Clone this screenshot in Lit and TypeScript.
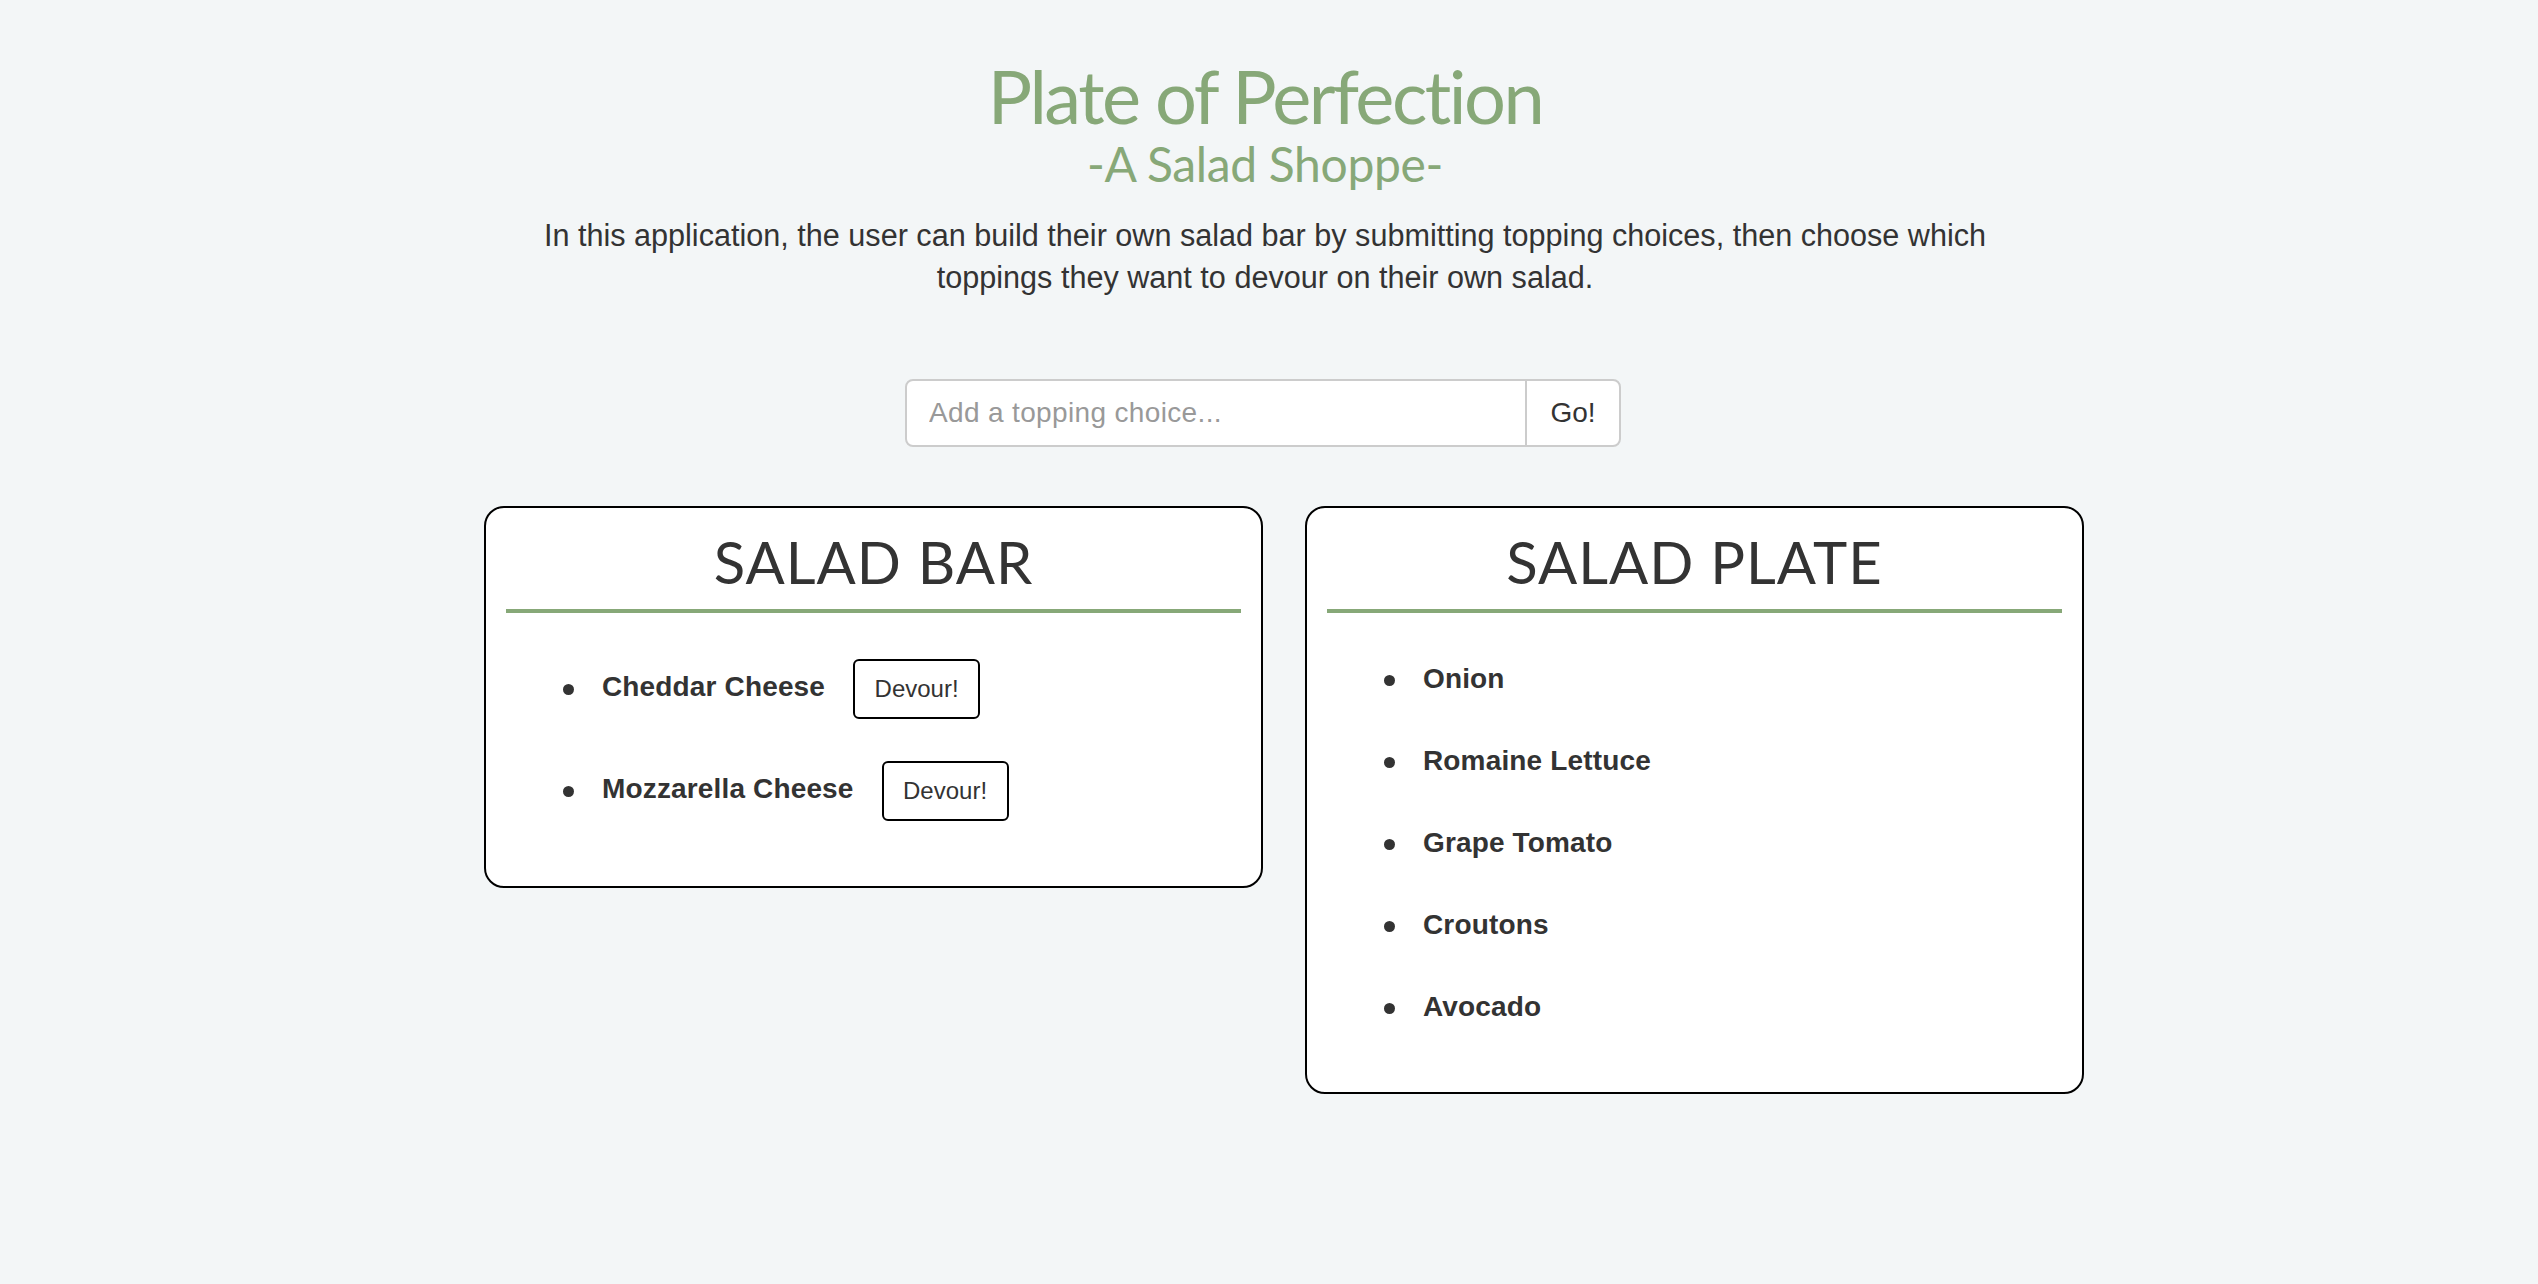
import { LitElement, html, css } from "lit";
import { customElement } from "lit/decorators.js";

const bar = ["Cheddar Cheese", "Mozzarella Cheese"];
const plate = ["Onion", "Romaine Lettuce", "Grape Tomato", "Croutons", "Avocado"];

@customElement("app-root")
export class AppRoot extends LitElement {
  static styles = css`
    :host {
      display: block;
      min-height: 1284px;
      background: #f3f6f7;
      color: #333;
      font-family: "Liberation Sans", Arial, sans-serif;
      font-size: 28px;
      line-height: 40px;
    }
    .header {
      width: 2530px;
      padding-top: 52px;
      text-align: center;
    }
    h1, .sub, h2 {
      margin: 0;
      font-family: Lato, sans-serif;
      font-weight: 400;
    }
    h1 {
      color: #87a878;
      font-size: 74px;
      line-height: 88px;
      letter-spacing: -2.5px;
    }
    .sub {
      color: #87a878;
      font-size: 48px;
      line-height: 48px;
      letter-spacing: -0.35px;
    }
    .intro {
      margin: 26px 0 0;
      font-size: 30.6px;
      line-height: 42px;
      padding: 0 500px;
    }
    .form {
      display: flex;
      width: 716px;
      height: 68px;
      margin: 81px 0 0 905px;
      box-sizing: border-box;
      background: #fff;
      border: 2px solid #ccc;
      border-radius: 8px;
    }
    input {
      flex: 1;
      min-width: 0;
      border: 0;
      background: none;
      padding: 0 22px;
      font: inherit;
      color: #555;
      outline: none;
    }
    input::placeholder { color: #999; opacity: 1; letter-spacing: 0.35px; }
    .go {
      width: 94px;
      box-sizing: border-box;
      border: 0;
      border-left: 2px solid #ccc;
      background: none;
      font: inherit;
      color: #333;
      padding: 0;
    }
    .cards {
      display: flex;
      align-items: flex-start;
      gap: 42px;
      margin: 59px 0 0 484px;
    }
    .card {
      width: 779px;
      box-sizing: border-box;
      background: #fff;
      border: 2px solid #000;
      border-radius: 20px;
      padding: 0 20px 23px;
    }
    h2 {
      color: #333;
      font-size: 58px;
      line-height: 94px;
      padding-top: 7px;
      text-align: center;
      letter-spacing: 1px;
      border-bottom: 4px solid #87a878;
    }
    ul {
      margin: 46px 0 0;
      padding: 0 0 0 96px;
      list-style: none;
    }
    li {
      margin-bottom: 42px;
      font-weight: 700;
      letter-spacing: 0.15px;
    }
    li::before {
      content: "";
      display: inline-block;
      vertical-align: middle;
      width: 11px;
      height: 11px;
      margin: 0 28px 0 -39px;
      border-radius: 50%;
      background: #333;
    }
    .devour {
      display: inline-block;
      vertical-align: middle;
      width: 127px;
      height: 60px;
      margin-left: 28px;
      box-sizing: border-box;
      padding: 0;
      background: #fff;
      color: #333;
      border: 2px solid #000;
      border-radius: 6px;
      font: 400 24px "Liberation Sans", Arial, sans-serif;
    }
  `;

  render() {
    return html`
      <div class="header">
        <h1>Plate of Perfection</h1>
        <div class="sub">-A Salad Shoppe-</div>
        <p class="intro">In this application, the user can build their own salad bar by submitting topping choices, then choose which toppings they want to devour on their own salad.</p>
      </div>
      <div class="form">
        <input type="text" placeholder="Add a topping choice..." />
        <button class="go">Go!</button>
      </div>
      <div class="cards">
        <section class="card">
          <h2>SALAD BAR</h2>
          <ul>
            ${bar.map((t) => html`<li>${t}<button class="devour">Devour!</button></li>`)}
          </ul>
        </section>
        <section class="card">
          <h2>SALAD PLATE</h2>
          <ul>
            ${plate.map((t) => html`<li>${t}</li>`)}
          </ul>
        </section>
      </div>
    `;
  }
}
